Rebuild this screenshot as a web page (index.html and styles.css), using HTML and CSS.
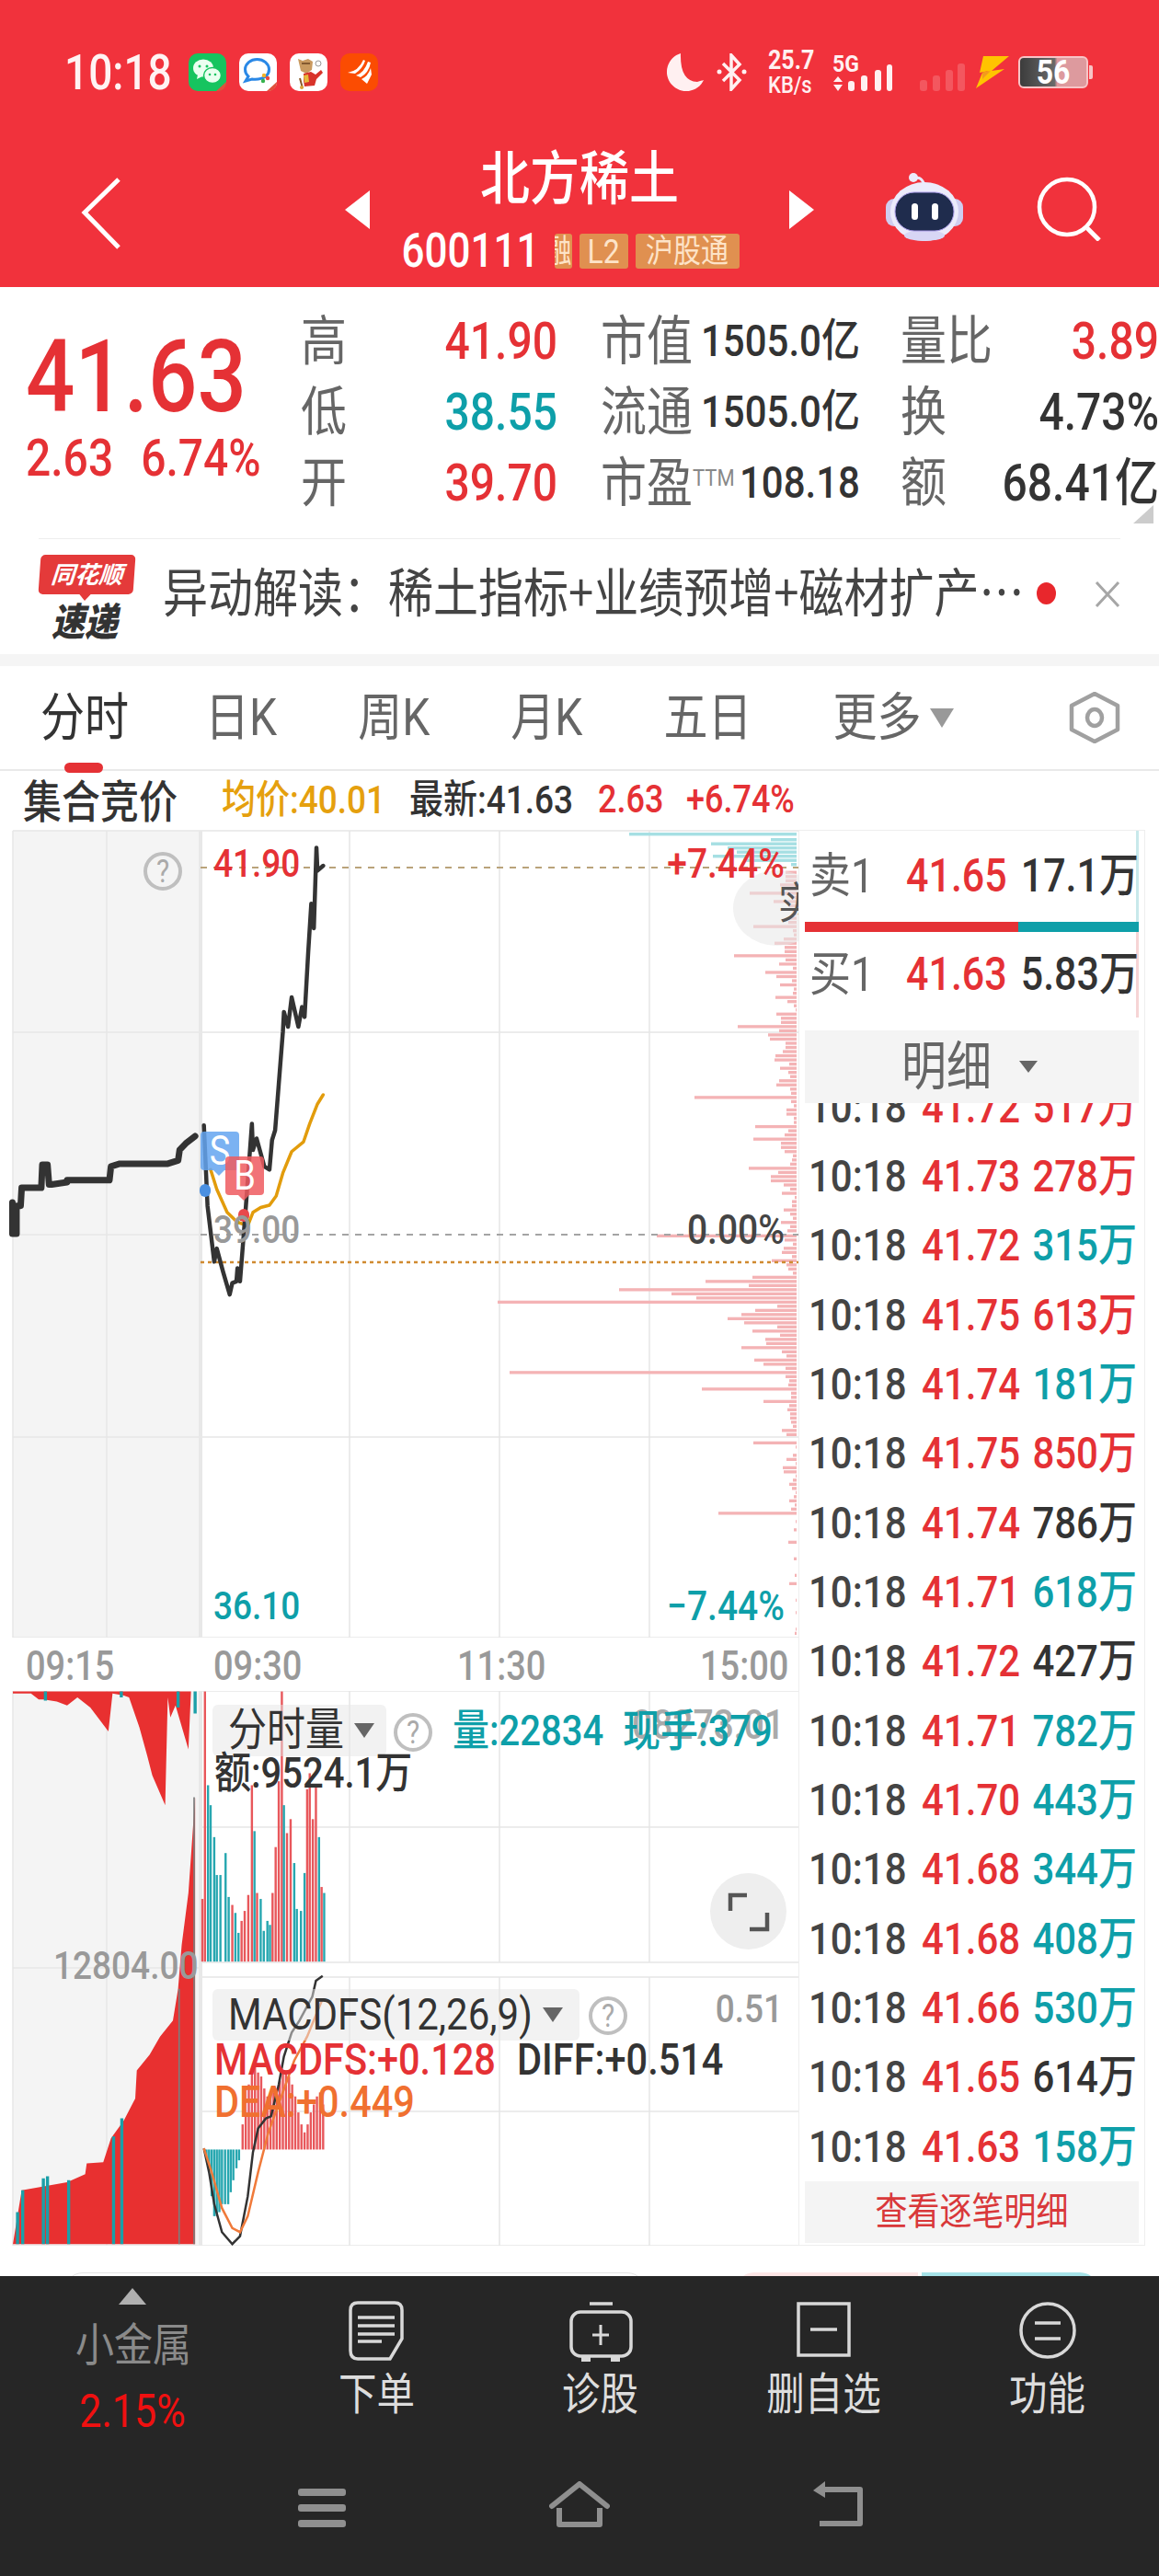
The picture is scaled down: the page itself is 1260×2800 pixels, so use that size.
FILE: index.html
```html
<!DOCTYPE html>
<html lang="zh-CN">
<head>
    <meta charset="UTF-8">
    <meta name="viewport" content="width=device-width, initial-scale=1.0">
    <title>北方稀土 600111</title>
    <link rel="stylesheet" href="styles.css">
</head>
<body>
    <header class="header">
        <div class="status-bar">
            <span class="st status-time">10:18</span>
            <div class="app-icons">
                <svg class="app-icon" viewBox="0 0 41 41"><rect width="41" height="41" rx="10" fill="#16c45f"/><ellipse cx="16" cy="16" rx="11" ry="9.5" fill="#eafff0"/><path d="M10 23l-1 5 6-3z" fill="#eafff0"/><ellipse cx="26" cy="24" rx="9.5" ry="8.5" fill="#eafff0" stroke="#16c45f" stroke-width="1.5"/><circle cx="12" cy="14" r="1.5" fill="#16c45f"/><circle cx="20" cy="14" r="1.5" fill="#16c45f"/><circle cx="23" cy="23" r="1.3" fill="#16c45f"/><circle cx="29" cy="23" r="1.3" fill="#16c45f"/><path d="M41 31v1a9 9 0 0 1-9 9h-2z" fill="#e0503c"/></svg>
                <svg class="app-icon" viewBox="0 0 41 41"><rect width="41" height="41" rx="10" fill="#fff"/><path d="M7 30l3-5a13 11 0 1 1 19 0q-6 4-15 3z" fill="none" stroke="#2a88e6" stroke-width="3"/><circle cx="27" cy="24" r="2.2" fill="#f5b32a"/><circle cx="31" cy="27" r="2.2" fill="#f0483c"/><circle cx="26" cy="30" r="2.2" fill="#37b24d"/><path d="M41 31v1a9 9 0 0 1-9 9h-2z" fill="#e0503c"/></svg>
                <svg class="app-icon" viewBox="0 0 41 41"><rect width="41" height="41" rx="10" fill="#fff"/><path d="M9 6l5 2 6-2 5 3-1 9-6 4-6-3z" fill="#c99a60"/><path d="M13 11l9 0" stroke="#6b4520" stroke-width="1.5"/><path d="M15 22l8-2 5 3 6-5 2 3-7 7-2 7-11 1-1-6z" fill="#d8332a"/><path d="M15 24l5-1 1 8-5 1z" fill="#e7b93c"/><path d="M11 27l3 11" stroke="#8a5a2a" stroke-width="2"/><circle cx="31" cy="11" r="3" fill="none" stroke="#999"/><circle cx="13" cy="37" r="2" fill="#d9a63a"/></svg>
                <svg class="app-icon" viewBox="0 0 41 41"><rect width="41" height="41" rx="10" fill="#fb4c02"/><path d="M8 21q12-2 17-14l2 1q-3 9-11 14zM17 24q9-3 13-15l3 1q-2 11-11 16zM23 28q7-3 10-12l1 7-5 10z" fill="#fff"/></svg>
            </div>
            <div class="status-right">
                <svg class="moon" viewBox="0 0 40 41"><path d="M15 0a21 21 0 1 0 25 29q-3 1-7 2Q14 30 15 0z" fill="#fff0f1"/></svg>
                <svg class="bluetooth" viewBox="0 0 35 41"><path d="M8 11l18 18-9 10V2l9 10-18 18" fill="none" stroke="#fff0f1" stroke-width="3.5"/><circle cx="4" cy="20" r="2.5" fill="#fff0f1"/><circle cx="31" cy="20" r="2.5" fill="#fff0f1"/></svg>
                <div class="net-speed">
                    <span class="st">25.7</span>
                    <span class="st speed-unit">KB/s</span>
                </div>
                <div class="net-type">
                    <span class="st net-name">5G</span>
                    <svg viewBox="0 0 65 42"><path d="M6 26l5 6H1zM6 42l5-7H1z" fill="#fff0f1"/><rect x="17" y="31" width="7" height="11" rx="3" fill="#fff0f1"/><rect x="31" y="25" width="7" height="17" rx="3" fill="#fff0f1"/><rect x="46" y="19" width="7" height="23" rx="3" fill="#fff0f1"/><rect x="59" y="13" width="6" height="29" rx="3" fill="#fff0f1"/></svg>
                </div>
                <svg class="signal-off" viewBox="0 0 50 30"><rect x="0" y="18" width="8" height="12" rx="3"/><rect x="14" y="13" width="8" height="17" rx="3"/><rect x="28" y="7" width="8" height="23" rx="3"/><rect x="41" y="0" width="8" height="30" rx="3"/></svg>
                <svg class="bolt" viewBox="0 0 37 36"><path d="M9 1h28L18 17l14-2L1 36l7-17 7-2-10 2z" fill="#ffc400"/><path d="M8 19l9-2-9 9z" fill="#f29a1e"/></svg>
                <div class="battery">
                    <div class="battery-body"><span class="st">56</span></div>
                    <div class="battery-nub"></div>
                </div>
            </div>
        </div>
        <div class="nav">
            <svg class="nav-back" viewBox="0 0 50 80"><path d="M44 3L7 39l37 38" fill="none" stroke="#fff" stroke-width="5"/></svg>
            <div class="tri-left"></div>
            <div class="stock">
                <div class="st stock-name">北方稀土</div>
                <div class="stock-code">
                    <span class="st code">600111</span>
                    <span class="badge badge-cut"><span class="st">融</span></span>
                    <span class="badge badge-l2"><span class="st">L2</span></span>
                    <span class="badge badge-hgt"><span class="st">沪股通</span></span>
                </div>
            </div>
            <div class="tri-right"></div>
            <svg class="robot" viewBox="0 0 84 80">
                <path d="M30 7q8-6 13 8" fill="none" stroke="#e9e8fb" stroke-width="3"/>
                <circle cx="30" cy="5" r="5" fill="#ecebfb"/>
                <rect x="0" y="28" width="84" height="30" rx="9" fill="#cfcdf0"/>
                <ellipse cx="42" cy="42" rx="37" ry="32" fill="#ecebfb"/>
                <ellipse cx="42" cy="68" rx="22" ry="6" fill="#d8d6f5"/>
                <rect x="10" y="21" width="64" height="42" rx="21" fill="#1f2c4d" stroke="#a99be8" stroke-width="1"/>
                <rect x="28" y="33" width="7" height="18" rx="3.5" fill="#fff"/>
                <rect x="50" y="33" width="7" height="18" rx="3.5" fill="#fff"/>
            </svg>
            <svg class="search" viewBox="0 0 70 70"><circle cx="33" cy="33" r="30" fill="none" stroke="#fff" stroke-width="4.5"/><path d="M55 56l13 13" stroke="#fff" stroke-width="5"/></svg>
        </div>
    </header>

    <section class="quote">
        <div class="price-box">
            <div class="st last-price">41.63</div>
            <div class="st price-change"><span>2.63</span><span>6.74%</span></div>
        </div>
        <div class="stats">
            <div class="stat"><span class="st stat-key">高</span><span class="st stat-val up">41.90</span></div>
            <div class="stat"><span class="st stat-key">市值</span><span class="st stat-num">1505.0亿</span></div>
            <div class="stat"><span class="st stat-key">量比</span><span class="st stat-val up">3.89</span></div>
            <div class="stat"><span class="st stat-key">低</span><span class="st stat-val down">38.55</span></div>
            <div class="stat"><span class="st stat-key">流通</span><span class="st stat-num">1505.0亿</span></div>
            <div class="stat"><span class="st stat-key">换</span><span class="st stat-val flat">4.73%</span></div>
            <div class="stat"><span class="st stat-key">开</span><span class="st stat-val up">39.70</span></div>
            <div class="stat"><span class="st stat-key">市盈<sup class="ttm">TTM</sup></span><span class="st stat-num">108.18</span></div>
            <div class="stat"><span class="st stat-key">额</span><span class="st stat-val flat">68.41亿</span></div>
        </div>
        <div class="corner-mark"></div>
    </section>

    <section class="news">
        <div class="news-logo">
            <div class="logo-flag"><span class="logo-name">同花顺</span></div>
            <div class="st logo-sub">速递</div>
        </div>
        <div class="st news-text">异动解读：稀土指标+业绩预增+磁材扩产…</div>
        <div class="news-dot"></div>
        <svg class="news-close" viewBox="0 0 28 30"><path d="M2 2l24 26M26 2L2 28" stroke="#a6a6a6" stroke-width="3"/></svg>
    </section>
    <div class="divider"></div>

    <nav class="tabs">
        <div class="tab tab-active"><span class="st">分时</span></div>
        <div class="tab"><span class="st">日K</span></div>
        <div class="tab"><span class="st">周K</span></div>
        <div class="tab"><span class="st">月K</span></div>
        <div class="tab"><span class="st">五日</span></div>
        <div class="tab"><span class="st">更多</span><span class="tab-caret"></span></div>
        <svg class="tab-setting" viewBox="0 0 56 56"><path d="M28 2l25 13v26L28 54 3 41V15z" fill="none" stroke="#a0a0a0" stroke-width="4.5" stroke-linejoin="round"/><ellipse cx="28" cy="28" rx="8" ry="9" fill="none" stroke="#a0a0a0" stroke-width="4.5"/></svg>
    </nav>

    <div class="info-row">
        <span class="st info-title">集合竞价</span>
        <span class="st info-avg">均价:40.01</span>
        <span class="st info-last">最新:41.63</span>
        <span class="st info-up info-chg">2.63</span>
        <span class="st info-up info-pct">+6.74%</span>
    </div>

    <main class="market">
        <div class="charts">
            <div class="chart-price">
                <svg id="priceChart" class="chart-svg" viewBox="0 900 868 880" width="868" height="880">
                    <rect x="14" y="903" width="204" height="877" fill="#f4f4f4"/>
                    <path class="grid" d="M14 903H868M14 1122H868M14 1342H218M14 1562H868M14 1780H868M14 903V1780M116 903V1780M218 903V1780M380 903V1780M543 903V1780M706 903V1780"/>
                    <path d="M218 903V1780" stroke="#e8e8e8" stroke-width="4"/>
                    <g id="depthBars"></g>
                    <path d="M218 943H868" fill="none" stroke="#b9a37a" stroke-width="2" stroke-dasharray="7 7"/>
                    <path d="M218 1342H868" fill="none" stroke="#a4a4a4" stroke-width="2" stroke-dasharray="7 7"/>
                    <path d="M218 1372H868" fill="none" stroke="#d08a30" stroke-width="2.5" stroke-dasharray="4 4"/>
                    <g transform="translate(0 900) scale(.5612 .3571)" fill="none" stroke-linejoin="round" stroke-linecap="round">
                        <path class="line-thick" d="M24 1140V1235H32V1150H40L42 1095H80L82 1025H92L95 1085H100L130 1078V1072H212L215 1030L232 1022H325L345 1012L348 980L360 960L378 938"/>
                        <path class="line-avg" d="M408 1040L420 1100L440 1170L460 1200L480 1210L490 1170L505 1155L522 1148L535 1120L548 1050L565 985L588 955L600 900L615 840L626 812"/>
                        <path class="line-price" d="M395 905L402 1150L415 1320L420 1280L432 1350L445 1420L450 1385L458 1380L460 1340L465 1380L475 1180L488 900L490 980L497 945L512 1030L522 1040L527 950L533 920L540 780L548 620L550 560L558 605L565 515L578 605L585 545L590 575L597 380L603 230L608 305L613 60L615 130L626 115"/>
                    </g>
                </svg>
                <span class="mark mark-s"><span class="st">S</span></span>
                <span class="mark mark-b"><span class="st">B</span></span>
                <span class="dot dot-s"></span>
                <span class="dot dot-b"></span>
                <span class="help help-main"><span class="st">?</span></span>
                <span class="float-button"></span>
                <span class="st float-text">实</span>
                <span class="st axis-label axis-high up">41.90</span>
                <span class="st axis-label pct-high up">+7.44%</span>
                <span class="st axis-label axis-mid">39.00</span>
                <span class="st axis-label pct-mid">0.00%</span>
                <span class="st axis-label axis-low down">36.10</span>
                <span class="st axis-label pct-low down">−7.44%</span>
            </div>

            <div class="time-axis">
                <span class="st time-a">09:15</span>
                <span class="st time-b">09:30</span>
                <span class="st time-c">11:30</span>
                <span class="st time-d">15:00</span>
            </div>

            <div class="chart-lower">
                <svg id="lowerChart" class="chart-svg" viewBox="0 1838 868 603" width="868" height="603">
                    <rect x="14" y="1838" width="204" height="603" fill="#f4f4f4"/>
                    <rect x="218" y="2133" width="650" height="16" fill="#fff"/>
                    <path class="grid" d="M14 2139H218M218 1838H868M218 1986H868M218 2133H868M218 2149H868M218 2295H868M14 2441H868M14 1838V2441M116 1838V2441M380 1838V2133M543 1838V2133M706 1838V2133M380 2149V2441M543 2149V2441M706 2149V2441"/>
                    <path d="M218 1838V2441" stroke="#e8e8e8" stroke-width="4"/>
                    <g transform="translate(0 1780) scale(.5612 .4337)">
                        <path fill="#e83030" d="M25 135V140L60 140L75 155L85 155L110 160L130 170L150 150L175 175L210 235L218 140L240 145L250 150L270 225L285 295L295 345L320 420L325 150L330 200L340 170L365 280L370 135Z"/>
                        <path fill="#e83030" d="M25 1520L42 1385L130 1365L165 1345L168 1318L200 1315L215 1255L240 1210L262 1155L265 1085L290 1045L310 1000L335 960L345 880L352 770L365 640L378 400V1520Z"/>
                        <path fill="none" stroke="#1a9fa8" stroke-width="6" d="M34 1520V1440M44 1520V1385M84 1520V1355M92 1520V1350M133 1520V1360M220 1520V1250M236 1520V1205M88 135V158M235 135V150M345 135V175M378 135V190"/>
                        <path fill="none" stroke="#7d7d7d" stroke-width="3" d="M347 1520V880M376 1520V400"/>
                    </g>
                    <g id="volumeBars"></g>
                    <g id="macdBars"></g>
                    <g transform="translate(0 1780) scale(.5612 .4337)" fill="none">
                        <path class="line-macd" stroke="#333" d="M395 1280L405 1340L415 1420L430 1490L450 1520L465 1500L480 1400L490 1290L500 1230L515 1205L525 1200L540 1120L550 1050L565 990L580 960L605 900L612 860L625 848"/>
                        <path class="line-macd" stroke="#f07a3a" d="M395 1280L410 1340L430 1430L450 1480L465 1490L480 1450L500 1340L520 1240L545 1150L570 1060L595 1000L625 905"/>
                    </g>
                </svg>
                <span class="st axis-label ghost-value">08273.01</span>
                <div class="selector selector-vol"><span class="st">分时量</span><span class="caret"></span></div>
                <span class="help help-vol"><span class="st">?</span></span>
                <span class="st vol-label vol-qty">量:22834</span>
                <span class="st vol-label vol-hand">现手:379</span>
                <span class="st vol-label vol-amount">额:9524.1万</span>
                <span class="st axis-label side-value">12804.00</span>
                <div class="expand">
                    <svg viewBox="0 0 83 83"><path d="M22 41V24H40M62 43V61H43" fill="none" stroke="#555" stroke-width="4.5"/></svg>
                </div>
                <div class="selector selector-macd"><span class="st">MACDFS(12,26,9)</span><span class="caret"></span></div>
                <span class="help help-macd"><span class="st">?</span></span>
                <span class="st axis-label macd-top">0.51</span>
                <span class="st vol-label macd-val up">MACDFS:+0.128</span>
                <span class="st vol-label macd-diff">DIFF:+0.514</span>
                <span class="st vol-label macd-dea">DEA:+0.449</span>
            </div>
        </div>

        <aside class="panel">
            <span class="strip strip-sell"></span>
            <span class="strip strip-buy"></span>
            <div class="order order-sell">
                <span class="st order-key">卖1</span>
                <span class="st order-price up">41.65</span>
                <span class="st order-vol">17.1万</span>
            </div>
            <div class="order-bar"><div class="order-bar-red"></div><div class="order-bar-teal"></div></div>
            <div class="order order-buy">
                <span class="st order-key">买1</span>
                <span class="st order-price up">41.63</span>
                <span class="st order-vol">5.83万</span>
            </div>
            <div class="detail-head"><span class="st">明细</span><span class="detail-caret"></span></div>
            <div class="trades">
                <div class="trade"><span class="st time">10:18</span><span class="st price up">41.72</span><span class="st vol up">517万</span></div>
                <div class="trade"><span class="st time">10:18</span><span class="st price up">41.73</span><span class="st vol up">278万</span></div>
                <div class="trade"><span class="st time">10:18</span><span class="st price up">41.72</span><span class="st vol down">315万</span></div>
                <div class="trade"><span class="st time">10:18</span><span class="st price up">41.75</span><span class="st vol up">613万</span></div>
                <div class="trade"><span class="st time">10:18</span><span class="st price up">41.74</span><span class="st vol down">181万</span></div>
                <div class="trade"><span class="st time">10:18</span><span class="st price up">41.75</span><span class="st vol up">850万</span></div>
                <div class="trade"><span class="st time">10:18</span><span class="st price up">41.74</span><span class="st vol flat">786万</span></div>
                <div class="trade"><span class="st time">10:18</span><span class="st price up">41.71</span><span class="st vol down">618万</span></div>
                <div class="trade"><span class="st time">10:18</span><span class="st price up">41.72</span><span class="st vol flat">427万</span></div>
                <div class="trade"><span class="st time">10:18</span><span class="st price up">41.71</span><span class="st vol down">782万</span></div>
                <div class="trade"><span class="st time">10:18</span><span class="st price up">41.70</span><span class="st vol down">443万</span></div>
                <div class="trade"><span class="st time">10:18</span><span class="st price up">41.68</span><span class="st vol down">344万</span></div>
                <div class="trade"><span class="st time">10:18</span><span class="st price up">41.68</span><span class="st vol down">408万</span></div>
                <div class="trade"><span class="st time">10:18</span><span class="st price up">41.66</span><span class="st vol down">530万</span></div>
                <div class="trade"><span class="st time">10:18</span><span class="st price up">41.65</span><span class="st vol flat">614万</span></div>
                <div class="trade"><span class="st time">10:18</span><span class="st price up">41.63</span><span class="st vol down">158万</span></div>
            </div>
            <div class="detail-more"><span class="st">查看逐笔明细</span></div>
        </aside>
    </main>

    <div class="peek">
        <div class="peek-search"></div>
        <div class="peek-sell"></div>
        <div class="peek-buy"></div>
    </div>

    <footer class="bottom">
        <div class="actions">
            <div class="action action-sector">
                <div class="sector-arrow"></div>
                <span class="st sector-name">小金属</span>
                <span class="st sector-pct">2.15%</span>
            </div>
            <div class="action">
                <svg viewBox="0 0 80 70"><path d="M19 5q-8 0-8 8v44q0 9 8 9h35l13-22V13q0-8-8-8z" fill="none" stroke="#d8d8d8" stroke-width="3.5"/><path d="M19 21h40M19 30h40M19 39h40M19 47h26" stroke="#d8d8d8" stroke-width="3.5"/></svg>
                <span class="st action-name">下单</span>
            </div>
            <div class="action">
                <svg viewBox="0 0 80 70"><path d="M28 6h25" stroke="#d8d8d8" stroke-width="3.5"/><rect x="8" y="15" width="65" height="48" rx="10" fill="none" stroke="#d8d8d8" stroke-width="3.5"/><path d="M40 29v22M31 40h18" stroke="#d8d8d8" stroke-width="3"/><path d="M20 63v5h8v-5M52 63v5h8v-5" fill="#d8d8d8" stroke="#d8d8d8" stroke-width="2"/></svg>
                <span class="st action-name">诊股</span>
            </div>
            <div class="action">
                <svg viewBox="0 0 80 70"><rect x="12" y="6" width="55" height="56" fill="none" stroke="#d8d8d8" stroke-width="3.5"/><path d="M25 34h29" stroke="#d8d8d8" stroke-width="3.5"/></svg>
                <span class="st action-name">删自选</span>
            </div>
            <div class="action">
                <svg viewBox="0 0 80 70"><ellipse cx="40" cy="35" rx="29" ry="29" fill="none" stroke="#d8d8d8" stroke-width="3.5"/><path d="M26 27h28M26 44h28" stroke="#d8d8d8" stroke-width="3.5"/></svg>
                <span class="st action-name">功能</span>
            </div>
        </div>
        <div class="sys-nav">
            <svg class="sys-menu" viewBox="0 0 52 42"><rect width="52" height="8" rx="3" fill="#8f8f8f"/><rect y="17" width="52" height="8" rx="3" fill="#8f8f8f"/><rect y="34" width="52" height="8" rx="3" fill="#8f8f8f"/></svg>
            <svg class="sys-home" viewBox="0 0 66 50"><path d="M3 27L33 3l30 24" fill="none" stroke="#8f8f8f" stroke-width="6" stroke-linejoin="round" stroke-linecap="round"/><path d="M11 29v18h44V29" fill="none" stroke="#8f8f8f" stroke-width="6" stroke-linejoin="round"/></svg>
            <svg class="sys-back" viewBox="0 0 55 50"><path d="M14 0L1 10l13 8z" fill="#8f8f8f"/><path d="M10 9h42v37H8" fill="none" stroke="#8f8f8f" stroke-width="6" stroke-linejoin="round"/></svg>
        </div>
    </footer>

    <script src="chart.js"></script>
</body>
</html>
```

FILE: styles.css
```css
* {
    box-sizing: border-box;
}
body {
    margin: 0;
    width: 1260px;
    height: 2800px;
    overflow: hidden;
    background-color: #fff;
    color: #333;
    font-family: Roboto, "Noto Sans CJK SC", sans-serif;
}
/* the capture is taller than it is wide, every text is drawn a bit stretched */
.st {
    display: inline-block;
    line-height: 1;
    white-space: nowrap;
    transform: scaleY(1.16);
}
.up { color: #e53135; }
.down { color: #0e9fa9; }
.flat { color: #333; }

/* header */
.header {
    height: 312px;
    background-color: #f1323c;
    color: #fff;
}
.status-bar {
    height: 156px;
    display: flex;
    align-items: center;
    padding-left: 70px;
    padding-right: 72px;
}
.status-time {
    width: 135px;
    font-size: 46px;
    font-weight: 500;
    color: #fff3f3;
}
.app-icons {
    display: flex;
    gap: 14px;
}
.app-icon {
    width: 41px;
    height: 41px;
}
.status-right {
    margin-left: auto;
    display: flex;
    align-items: center;
}
.moon {
    width: 40px;
    height: 41px;
    margin-right: 13px;
}
.bluetooth {
    width: 35px;
    height: 41px;
    margin-right: 22px;
}
.net-speed {
    width: 50px;
    margin-right: 20px;
    display: flex;
    flex-direction: column;
    gap: 4px;
    font-size: 25px;
    font-weight: 700;
    color: #fff0f1;
}
.speed-unit {
    font-size: 22px;
    font-weight: 500;
}
.net-type {
    position: relative;
    width: 65px;
    height: 42px;
    margin-right: 30px;
}
.net-type svg {
    display: block;
    width: 65px;
    height: 42px;
}
.net-name {
    position: absolute;
    left: 0;
    top: 1px;
    font-size: 23px;
    font-weight: 700;
    color: #fff0f1;
}
.signal-off {
    width: 50px;
    height: 30px;
    margin-top: 11px;
    margin-right: 10px;
    fill: rgba(255, 255, 255, 0.18);
}
.bolt {
    width: 37px;
    height: 36px;
    margin-right: 10px;
}
.battery {
    display: flex;
    align-items: center;
}
.battery-body {
    width: 76px;
    height: 35px;
    display: flex;
    align-items: center;
    justify-content: center;
    border: 2.5px solid #f8c4c6;
    border-radius: 6px;
    background: linear-gradient(90deg, #3c3c3c 0%, #6a6a6a 52%, #dd9a9e 56%, #dd9a9e 100%);
    color: #fff;
    font-size: 32px;
    font-weight: 700;
}
.battery-nub {
    width: 4px;
    height: 15px;
    margin-left: 1px;
    border-radius: 0 2px 2px 0;
    background-color: #f8c4c6;
}
.nav {
    height: 156px;
    display: flex;
    align-items: center;
    padding-left: 85px;
}
.nav-back {
    width: 50px;
    height: 80px;
    margin-right: 240px;
    margin-top: -5px;
}
.tri-left {
    width: 0;
    height: 0;
    margin-top: -12px;
    border-top: 21px solid transparent;
    border-bottom: 21px solid transparent;
    border-right: 27px solid #fff;
}
.tri-right {
    width: 0;
    height: 0;
    margin-top: -12px;
    border-top: 21px solid transparent;
    border-bottom: 21px solid transparent;
    border-left: 27px solid #fff;
}
.stock {
    width: 456px;
    height: 156px;
    padding-top: 12px;
    display: flex;
    flex-direction: column;
    align-items: center;
}
.stock-name {
    font-size: 54px;
    font-weight: 500;
    height: 54px;
}
.stock-code {
    margin-top: 32px;
    margin-right: 20px;
    height: 38px;
    display: flex;
    align-items: center;
    gap: 8px;
}
.code {
    font-size: 44px;
    font-weight: 500;
    margin-right: 8px;
}
.badge {
    height: 38px;
    display: flex;
    align-items: center;
    justify-content: center;
    border-radius: 3px;
    background-color: #e09050;
    color: #fde3c8;
    font-size: 30px;
}
.badge-cut {
    width: 19px;
    overflow: hidden;
    justify-content: flex-end;
}
.badge-l2 {
    width: 53px;
    font-size: 32px;
}
.badge-hgt {
    width: 113px;
}
.robot {
    width: 84px;
    height: 80px;
    margin-left: 78px;
    margin-top: -12px;
}
.search {
    width: 70px;
    height: 70px;
    margin-left: 80px;
    margin-top: -15px;
}

/* price and stats */
.quote {
    position: relative;
    height: 273px;
    display: flex;
    padding-left: 28px;
}
.price-box {
    width: 300px;
    padding-top: 51px;
}
.last-price {
    font-size: 94px;
    font-weight: 500;
    color: #e53135;
}
.price-change {
    margin-top: 17px;
    display: flex;
    gap: 30px;
    font-size: 48px;
    font-weight: 500;
    color: #e53135;
}
.stats {
    padding-top: 20px;
    display: grid;
    grid-template-columns: 279px 281px 281px;
    grid-auto-rows: 77px;
    column-gap: 46px;
}
.stat {
    display: flex;
    align-items: center;
    justify-content: space-between;
}
.stat:nth-child(3n+2) {
    margin-left: 1px;
    margin-right: -2px;
}
.stat-key {
    font-size: 50px;
    color: #666;
}
.stat-val {
    font-size: 48px;
    font-weight: 500;
}
.stat-num {
    font-size: 42px;
    font-weight: 500;
    color: #333;
}
.ttm {
    font-size: 22px;
    line-height: 0;
    vertical-align: 14px;
    color: #888;
}
.corner-mark {
    position: absolute;
    right: 6px;
    bottom: 16px;
    width: 0;
    height: 0;
    border-bottom: 20px solid #ccc;
    border-left: 22px solid transparent;
}

/* news line */
.news {
    height: 126px;
    margin: 0 42px;
    display: flex;
    align-items: center;
    border-top: 1.5px solid #eee;
}
.news-logo {
    width: 104px;
    margin-right: 31px;
    display: flex;
    flex-direction: column;
    align-items: center;
}
.logo-flag {
    position: relative;
    width: 103px;
    height: 43px;
    display: flex;
    align-items: center;
    justify-content: center;
    border-radius: 5px;
    background-color: #e43a3a;
    transform: skewX(-4deg);
}
.logo-flag::after {
    content: "";
    position: absolute;
    left: 44px;
    bottom: -7px;
    border-left: 7px solid transparent;
    border-right: 7px solid transparent;
    border-top: 8px solid #e43a3a;
}
.logo-name {
    color: #fff;
    font-size: 26px;
    font-weight: 700;
    font-style: italic;
    line-height: 1;
}
.logo-sub {
    margin-top: 13px;
    margin-right: 4px;
    font-size: 36px;
    font-weight: 900;
    font-style: italic;
    color: #333;
}
.news-text {
    width: 950px;
    margin-top: -16px;
    font-family: "Noto Sans CJK SC", sans-serif;
    font-size: 49px;
    color: #444;
}
.news-dot {
    width: 21px;
    height: 24px;
    margin-top: -8px;
    border-radius: 50%;
    background-color: #e8272c;
}
.news-close {
    width: 28px;
    height: 30px;
    margin-top: -6px;
    margin-left: 42px;
}
.divider {
    height: 13px;
    background-color: #f5f5f5;
}

/* period tabs */
.tabs {
    height: 114px;
    display: flex;
    align-items: center;
    gap: 88px;
    padding-left: 44px;
    border-bottom: 2px solid #e9e9e9;
    color: #666;
    font-size: 48px;
}
.tab {
    position: relative;
    display: flex;
    align-items: center;
}
.tab-active {
    margin-right: -5px;
    color: #333;
}
.tab-active::after {
    content: "";
    position: absolute;
    left: 26px;
    bottom: -36px;
    width: 42px;
    height: 11px;
    border-radius: 6px;
    background-color: #e53135;
}
.tab-caret {
    width: 0;
    height: 0;
    position: absolute;
    left: 106px;
    top: 14px;
    border-left: 13px solid transparent;
    border-right: 13px solid transparent;
    border-top: 21px solid #999;
}
.tab-setting {
    width: 56px;
    height: 56px;
    margin-left: auto;
    margin-right: 42px;
}

/* summary line */
.info-row {
    height: 62px;
    padding-left: 25px;
    padding-top: 14px;
    display: flex;
    font-size: 37px;
    font-weight: 500;
}
.info-title {
    width: 216px;
    font-size: 42px;
    color: #333;
}
.info-avg {
    width: 204px;
    color: #e5a00e;
}
.info-last {
    width: 205px;
    color: #333;
}
.info-up {
    font-size: 36px;
    color: #e53135;
}
.info-chg {
    width: 96px;
}

/* charts */
.market {
    display: flex;
    height: 1541px;
}
.charts {
    width: 868px;
}
.chart-price {
    position: relative;
    height: 880px;
    overflow: hidden;
}
.chart-svg {
    display: block;
    position: absolute;
    left: 0;
    top: 0;
}
.grid {
    fill: none;
    stroke: #e6e6e6;
    stroke-width: 1.5;
}
.line-thick {
    stroke: #333;
    stroke-width: 7;
    vector-effect: non-scaling-stroke;
}
.line-price {
    stroke: #333;
    stroke-width: 4.5;
    vector-effect: non-scaling-stroke;
}
.line-avg {
    stroke: #e29c0c;
    stroke-width: 3.5;
    vector-effect: non-scaling-stroke;
}
.line-macd {
    stroke-width: 2.5;
    vector-effect: non-scaling-stroke;
}
.mark {
    position: absolute;
    width: 42px;
    height: 42px;
    display: flex;
    align-items: center;
    justify-content: center;
    border-radius: 4px;
    color: #fff;
    font-size: 38px;
}
.mark::after {
    content: "";
    position: absolute;
    left: 14px;
    bottom: -6px;
    border-left: 6px solid transparent;
    border-right: 6px solid transparent;
}
.mark-s {
    left: 218px;
    top: 330px;
    background-color: rgba(100, 165, 240, 0.85);
}
.mark-s::after {
    border-top: 6px solid rgba(100, 165, 240, 0.85);
}
.mark-b {
    left: 245px;
    top: 357px;
    background-color: rgba(238, 90, 95, 0.85);
}
.mark-b::after {
    border-top: 6px solid rgba(238, 90, 95, 0.85);
}
.dot {
    position: absolute;
    width: 12px;
    height: 14px;
    border-radius: 6px;
}
.dot-s {
    left: 217px;
    top: 387px;
    background-color: #4a90e2;
}
.dot-b {
    left: 259px;
    top: 414px;
    background-color: #e8484c;
}
.help {
    position: absolute;
    width: 42px;
    height: 42px;
    display: flex;
    align-items: center;
    justify-content: center;
    border: 4px solid #bfbfbf;
    border-radius: 50%;
    color: #aaa;
    font-size: 30px;
}
.help-main {
    left: 156px;
    top: 26px;
}
.float-button {
    position: absolute;
    left: 797px;
    top: 46px;
    width: 96px;
    height: 82px;
    border-radius: 50%;
    background-color: rgba(232, 232, 232, 0.55);
}
.float-text {
    position: absolute;
    left: 846px;
    top: 63px;
    font-size: 40px;
    color: #555;
}
.axis-label {
    position: absolute;
    font-size: 37px;
    font-weight: 500;
}
.axis-high {
    left: 232px;
    top: 20px;
}
.pct-high,
.pct-mid,
.pct-low {
    right: 15px;
    font-size: 39px;
}
.pct-high {
    top: 20px;
}
.axis-mid {
    left: 232px;
    top: 418px;
    color: #999;
}
.pct-mid {
    top: 418px;
    color: #444;
}
.axis-low {
    left: 232px;
    top: 827px;
}
.pct-low {
    top: 827px;
}
.time-axis {
    height: 58px;
    display: flex;
    align-items: center;
    padding-left: 28px;
    padding-top: 4px;
    color: #999;
    font-size: 38px;
    font-weight: 500;
}
.time-a {
    width: 204px;
}
.time-b {
    width: 265px;
}
.time-c {
    width: 264px;
}
.chart-lower {
    position: relative;
    height: 603px;
}
.selector {
    position: absolute;
    left: 231px;
    height: 56px;
    display: flex;
    align-items: center;
    padding-left: 17px;
    border-radius: 6px;
    background-color: rgba(230, 230, 230, 0.5);
    font-size: 42px;
    color: #333;
}
.selector-vol {
    top: 15px;
    width: 189px;
}
.selector-macd {
    top: 324px;
    width: 399px;
}
.caret {
    margin-left: 11px;
    border-left: 11px solid transparent;
    border-right: 11px solid transparent;
    border-top: 16px solid #666;
}
.help-vol {
    left: 428px;
    top: 24px;
}
.help-macd {
    left: 640px;
    top: 332px;
}
.ghost-value {
    right: 15px;
    top: 18px;
    font-size: 39px;
    color: #aaa;
}
.vol-label {
    position: absolute;
    font-size: 40px;
    font-weight: 500;
    color: #333;
}
.vol-qty {
    left: 492px;
    top: 24px;
    color: #0e9fa9;
}
.vol-hand {
    left: 677px;
    top: 24px;
    font-size: 41px;
    color: #0e9fa9;
}
.vol-amount {
    left: 233px;
    top: 70px;
}
.side-value {
    left: 58px;
    top: 280px;
    color: #999;
}
.expand {
    position: absolute;
    left: 772px;
    top: 198px;
    width: 83px;
    height: 83px;
    border-radius: 50%;
    background-color: #eee;
}
.expand svg {
    display: block;
}
.macd-top {
    right: 17px;
    top: 327px;
    color: #999;
}
.macd-val,
.macd-diff,
.macd-dea {
    font-size: 41.5px;
}
.macd-val {
    left: 233px;
    top: 380px;
    color: #e53135;
}
.macd-diff {
    left: 562px;
    top: 380px;
}
.macd-dea {
    left: 233px;
    top: 426px;
    color: #f07030;
}

/* order panel */
.panel {
    position: relative;
    width: 377px;
    margin-top: 2px;
    padding: 0 6px;
    display: flex;
    flex-direction: column;
    border: 1.5px solid #eee;
}
.strip {
    position: absolute;
    right: 6px;
    width: 3px;
}
.strip-sell {
    top: 0;
    height: 99px;
    background-color: #c8e9eb;
}
.strip-buy {
    top: 110px;
    height: 93px;
    background-color: #f6d4d5;
}
.order {
    display: flex;
    align-items: center;
    padding: 0 0 0 5px;
    font-size: 43px;
    font-weight: 500;
}
.order-sell {
    height: 99px;
}
.order-buy {
    height: 92px;
}
.order-key {
    width: 105px;
    font-size: 45px;
    font-weight: 400;
    color: #666;
}
.order-vol {
    margin-left: auto;
    color: #333;
}
.order-bar {
    display: flex;
    height: 11px;
}
.order-bar-red {
    width: 232px;
    background-color: #e53135;
}
.order-bar-teal {
    flex: 1;
    background-color: #0e9fa9;
}
.detail-head {
    position: relative;
    z-index: 1;
    flex: none;
    height: 79px;
    margin-top: 15px;
    padding-left: 105px;
    display: flex;
    align-items: center;
    background-color: #f4f4f4;
    color: #666;
    font-size: 49px;
}
.detail-caret {
    margin-left: 30px;
    border-left: 10px solid transparent;
    border-right: 10px solid transparent;
    border-top: 13px solid #666;
}
.trades {
    height: 1172px;
    overflow: hidden;
}
.trade {
    position: relative;
    top: -33px;
    height: 75.33px;
    display: flex;
    align-items: center;
    padding: 0 2px 0 4px;
    font-size: 42px;
    font-weight: 500;
}
.time {
    width: 123px;
    color: #444;
}
.vol {
    margin-left: auto;
}
.detail-more {
    flex: none;
    height: 67px;
    display: flex;
    align-items: center;
    justify-content: center;
    background-color: #f4f4f4;
    color: #d9383a;
    font-size: 35px;
}

/* bar on the bottom */
.peek {
    height: 33px;
    overflow: hidden;
    display: flex;
    padding-top: 29px;
    padding-left: 70px;
}
.peek-search {
    width: 632px;
    height: 40px;
    border: 1.5px solid #e4e4e4;
    border-radius: 20px;
}
.peek-sell {
    width: 198px;
    height: 40px;
    margin-left: 98px;
    border-radius: 20px 0 0 0;
    background-color: #fde6e6;
}
.peek-buy {
    width: 192px;
    height: 40px;
    margin-left: 4px;
    border-radius: 0 20px 0 0;
    background-color: #a6e3e8;
}
.bottom {
    height: 326px;
    background-color: #262626;
}
.actions {
    display: grid;
    grid-template-columns: 288px repeat(4, 243px);
    height: 190px;
    padding-top: 24px;
}
.action {
    display: flex;
    flex-direction: column;
    align-items: center;
}
.action svg {
    width: 80px;
    height: 70px;
}
.action-name {
    margin-top: 14px;
    font-size: 41.5px;
    color: #ddd;
}
.action-sector {
    margin-top: -11px;
}
.sector-arrow {
    width: 0;
    height: 0;
    border-left: 15px solid transparent;
    border-right: 15px solid transparent;
    border-bottom: 18px solid #b0b0b0;
}
.sector-name {
    margin-top: 24px;
    margin-left: 2px;
    font-size: 42px;
    color: #8a8a8a;
}
.sector-pct {
    margin-top: 29px;
    font-size: 43px;
    color: #f01010;
}
.sys-nav {
    position: relative;
    height: 136px;
    display: flex;
    padding-left: 324px;
    padding-top: 33px;
}
.sys-menu {
    width: 52px;
    height: 42px;
    margin-top: 8px;
}
.sys-home {
    width: 66px;
    height: 50px;
    margin-left: 221px;
}
.sys-back {
    width: 55px;
    height: 50px;
    margin-left: 220px;
}
```

FILE: chart.js
```js
const SVG_NS = 'http://www.w3.org/2000/svg';

function addRect(parent, x, y, w, h, fill) {
    const rect = document.createElementNS(SVG_NS, 'rect');
    rect.setAttribute('x', x);
    rect.setAttribute('y', y);
    rect.setAttribute('width', w);
    rect.setAttribute('height', h);
    rect.setAttribute('fill', fill);
    parent.appendChild(rect);
}

// volume by price, lengths from the right edge
const depthEdge = 866;
const depthTeal = [[905, 182], [911, 28], [915.5, 93], [920, 75], [924.5, 65], [929, 91], [933.5, 58], [938, 6]];
const depthUpper = [12, 12, 12, 18, 10, 51, 5, 25, 8, 5, 4, 8, 9, 47, 4, 3, 14, 24, 13, 13, 68, 12, 19, 4, 34, 22, 5, 18, 3, 4, 23, 10, 3, 1, 22, 17, 17, 64, 19, 31, 29, 12, 12, 15, 23, 24, 8, 18, 9, 7, 19, 22, 7, 6, 111, 6, 3, 11, 11, 3, 3, 45, 9, 13, 47, 17, 17, 13, 4, 5, 7, 52, 20, 28, 28, 14, 7, 16, 2, 5, 5, 14, 7, 4, 17, 7, 10];
const depthLower = [152, 13, 4, 14, 16, 5, 27, 11, 9, 4, 48, 99, 52, 193, 136, 109, 325, 21, 45, 60, 75, 57, 21, 48, 18, 34, 33, 60, 16, 11, 46, 36, 12, 312, 12, 8, 9, 103, 6, 6, 36, 8, 10, 7, 7, 6, 4, 16, 11, 0, 47, 1, 0, 4, 11, 1, 15, 14, 1, 4, 8, 5, 1, 3, 8, 2, 6, 85, 0, 1, 0, 3, 0, 0, 9, 0, 0, 0, 3, 0, 0, 0, 2, 0, 8, 0, 0, 0, 1, 0, 0, 1, 0, 0, 0, 1, 2];

const depthBars = document.getElementById('depthBars');
depthTeal.forEach(([y, len]) => addRect(depthBars, depthEdge - len, y, len, 3.4, '#a6dfe3'));
depthUpper.forEach((len, i) => addRect(depthBars, depthEdge - len, 946.6 + i * 4.53, len, 3.3, '#f4b3b5'));
depthLower.forEach((len, i) => {
    if (len) addRect(depthBars, depthEdge - len, 1341.7 + i * 4.5, len, 3.3, '#f4b3b5');
});

// the lower chart's values are kept in the crop's scale
const toX = x => x * 0.5612;
const toY = y => 1780 + y * 0.4337;

// x, top, r = red / t = teal
const volumes = [
    [392, 655, 'r'], [397, 135, 'r'], [403, 370, 't'], [408, 420, 't'], [415, 500, 't'], [420, 595, 't'],
    [427, 595, 't'], [437, 540, 't'], [443, 650, 't'], [450, 670, 'r'], [456, 690, 't'], [462, 740, 't'],
    [468, 710, 'r'], [474, 685, 'r'], [481, 645, 'r'], [488, 370, 'r'], [493, 485, 't'], [498, 640, 'r'],
    [505, 655, 't'], [511, 735, 't'], [518, 710, 't'], [523, 720, 't'], [528, 640, 'r'], [534, 525, 'r'],
    [540, 360, 'r'], [546, 135, 'r'], [550, 420, 't'], [556, 490, 'r'], [563, 455, 'r'], [570, 565, 't'],
    [575, 680, 't'], [583, 685, 't'], [590, 590, 't'], [595, 380, 'r'], [600, 340, 'r'], [606, 455, 'r'],
    [612, 375, 'r'], [618, 500, 't'], [623, 625, 'r'], [628, 640, 't']
];
const volumeBars = document.getElementById('volumeBars');
volumes.forEach(([x, top, side]) => {
    const fill = side === 'r' ? '#e8575b' : '#27a7b0';
    addRect(volumeBars, toX(x) - 1.2, toY(top), 2.4, toY(812) - toY(top), fill);
});

// MACD columns around the zero line
const macdZero = 1283;
const macdDown = [[400, 1300], [405, 1340], [410, 1400], [415, 1450], [420, 1450], [425, 1440], [430, 1420], [436, 1420], [442, 1420], [447, 1390], [452, 1360], [458, 1330], [463, 1310]];
const macdUp = [[470, 1220], [476, 1190], [482, 1120], [488, 1080], [494, 1060], [500, 1090], [506, 1100], [512, 1130], [518, 1150], [524, 1150], [530, 1140], [536, 1130], [542, 1110], [548, 1090], [554, 1095], [560, 1100], [566, 1120], [572, 1150], [578, 1190], [584, 1220], [590, 1240], [596, 1220], [602, 1190], [608, 1170], [614, 1150], [620, 1140], [626, 1170]];
const macdBars = document.getElementById('macdBars');
macdDown.forEach(([x, end]) => addRect(macdBars, toX(x) - 1.2, toY(macdZero), 2.4, toY(end) - toY(macdZero), '#27a7b0'));
macdUp.forEach(([x, top]) => addRect(macdBars, toX(x) - 1.2, toY(top), 2.4, toY(macdZero) - toY(top), '#e8575b'));
```
